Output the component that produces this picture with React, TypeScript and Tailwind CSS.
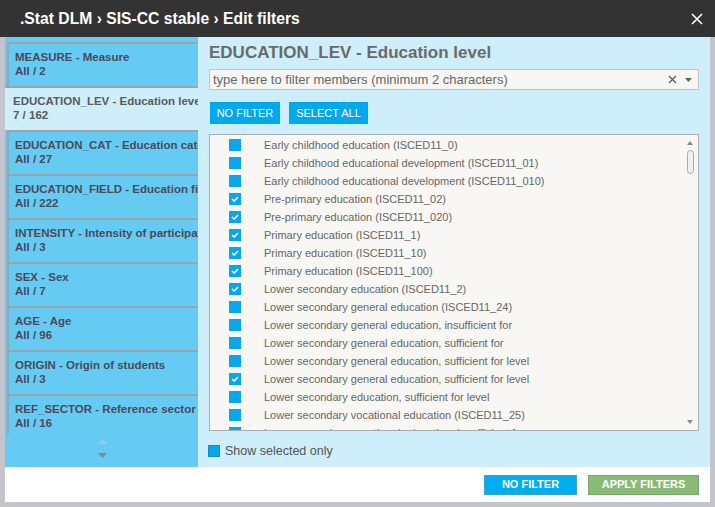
import React from 'react';

const dims = [
  { name: 'MEASURE - Measure', count: 'All / 2' },
  { name: 'EDUCATION_LEV - Education level', count: '7 / 162', active: true },
  { name: 'EDUCATION_CAT - Education category', count: 'All / 27' },
  { name: 'EDUCATION_FIELD - Education field', count: 'All / 222' },
  { name: 'INTENSITY - Intensity of participation', count: 'All / 3' },
  { name: 'SEX - Sex', count: 'All / 7' },
  { name: 'AGE - Age', count: 'All / 96' },
  { name: 'ORIGIN - Origin of students', count: 'All / 3' },
  { name: 'REF_SECTOR - Reference sector', count: 'All / 16' },
];

const members: [string, boolean][] = [
  ['Early childhood education (ISCED11_0)', false],
  ['Early childhood educational development (ISCED11_01)', false],
  ['Early childhood educational development (ISCED11_010)', false],
  ['Pre-primary education (ISCED11_02)', true],
  ['Pre-primary education (ISCED11_020)', true],
  ['Primary education (ISCED11_1)', true],
  ['Primary education (ISCED11_10)', true],
  ['Primary education (ISCED11_100)', true],
  ['Lower secondary education (ISCED11_2)', true],
  ['Lower secondary general education (ISCED11_24)', false],
  ['Lower secondary general education, insufficient for', false],
  ['Lower secondary general education, sufficient for', false],
  ['Lower secondary general education, sufficient for level', false],
  ['Lower secondary general education, sufficient for level', true],
  ['Lower secondary education, sufficient for level', false],
  ['Lower secondary vocational education (ISCED11_25)', false],
  ['Lower secondary vocational education, insufficient for', false],
];

const Check = ({ on }: { on: boolean }) => (
  <span className="w-[12px] h-[12px] bg-[#08a7ea] flex items-center justify-center shrink-0">
    {on && (
      <svg width="8" height="6" viewBox="0 0 8 6">
        <path d="M1 3 L3.2 5 L7 1" stroke="#fff" strokeWidth="1.6" fill="none" />
      </svg>
    )}
  </span>
);

export default function App() {
  return (
    <div className="w-[715px] h-[507px] bg-[#c4c4cc] flex flex-col overflow-hidden font-['Liberation_Sans',Arial,sans-serif]">
      {/* Title bar */}
      <div className="h-[37px] bg-[#333333] flex items-center justify-between pl-[20px] pr-[12px] shrink-0">
        <span className="text-white font-bold text-[15.7px]">.Stat DLM › SIS-CC stable › Edit filters</span>
        <svg width="12" height="12" viewBox="0 0 12 12">
          <path d="M1 1 L11 11 M11 1 L1 11" stroke="#fff" strokeWidth="1.6" />
        </svg>
      </div>

      <div className="flex-1 flex flex-col mx-[5px] mb-[5px]">
        <div className="flex h-[430px]">
          {/* Dimension list */}
          <div className="w-[193px] bg-[#66cbf2] flex flex-col pt-[5px]">
            <div className="h-[392px] overflow-hidden flex flex-col">
              {dims.map((d) =>
                d.active ? (
                  <div key={d.name} className="h-[44px] shrink-0 bg-[#cdeefa] border-t-2 border-[#9ca3aa] pl-[8px] pt-[6px] text-[#5a5a5a] text-[11.5px] font-bold leading-[14px] whitespace-nowrap overflow-hidden">
                    <div>{d.name}</div>
                    <div>{d.count}</div>
                  </div>
                ) : (
                  <div key={d.name} className="h-[44px] shrink-0 ml-[2px] border-l-2 border-t-2 border-[#9ca3aa] pl-[6px] pt-[6px] text-[#4a4a5a] text-[11.5px] font-bold leading-[14px] whitespace-nowrap overflow-hidden">
                    <div>{d.name}</div>
                    <div>{d.count}</div>
                  </div>
                )
              )}
            </div>
            <div className="flex flex-col items-center gap-[9px] pt-[5px] pl-[2px]">
              <svg width="9" height="5" viewBox="0 0 9 5"><path d="M0 5 L4.5 0 L9 5Z" fill="#9fc9dc" /></svg>
              <svg width="9" height="5" viewBox="0 0 9 5"><path d="M0 0 L4.5 5 L9 0Z" fill="#7a8a99" /></svg>
            </div>
          </div>

          {/* Members panel */}
          <div className="flex-1 bg-[#cdeefa] px-[11px] flex flex-col">
            <div className="h-[32px] flex items-end pb-[4px] text-[#6a6a6a] font-bold text-[17px]">
              EDUCATION_LEV - Education level
            </div>
            <div className="h-[21px] bg-[#f8f7f3] border border-[#c2c6c8] flex items-center pl-[3px] pr-[6px] text-[13px] text-[#666]">
              <span className="flex-1">type here to filter members (minimum 2 characters)</span>
              <svg width="9" height="9" viewBox="0 0 9 9" className="mr-[8px]">
                <path d="M1 1 L8 8 M8 1 L1 8" stroke="#555" strokeWidth="1.2" />
              </svg>
              <svg width="7" height="4" viewBox="0 0 7 4"><path d="M0 0 L3.5 4 L7 0Z" fill="#666" /></svg>
            </div>
            <div className="flex gap-[9px] mt-[12px] pl-[1px]">
              <button className="h-[22px] w-[70px] bg-[#00a8ec] text-white text-[11px]">NO FILTER</button>
              <button className="h-[22px] w-[79px] bg-[#00a8ec] text-white text-[11px]">SELECT ALL</button>
            </div>
            <div className="mt-[10px] h-[297px] bg-[#f8f7f3] border border-[#a9adb0] flex overflow-hidden">
              <div className="flex-1 flex flex-col pt-[1px] overflow-hidden">
                {members.map(([label, on], i) => (
                  <div key={i} className="h-[18px] shrink-0 flex items-center pl-[19px] gap-[23px] text-[11px] text-[#666] whitespace-nowrap">
                    <Check on={on} />
                    <span>{label}</span>
                  </div>
                ))}
              </div>
              <div className="w-[16px] flex flex-col items-center pt-[6px] pb-[6px]">
                <svg width="6" height="4" viewBox="0 0 6 4"><path d="M0 4 L3 0 L6 4Z" fill="#888" /></svg>
                <div className="w-[7px] h-[24px] mt-[5px] rounded-full border border-[#a9a9ae] bg-[#f0f0f0]" />
                <div className="flex-1" />
                <svg width="6" height="4" viewBox="0 0 6 4"><path d="M0 0 L3 4 L6 0Z" fill="#888" /></svg>
              </div>
            </div>
            <div className="flex items-center gap-[5px] mt-[11px] -ml-[1px]">
              <span className="w-[12px] h-[12px] bg-[#08a7ea] border border-[#0a90c8]" />
              <span className="text-[12.5px] text-[#555]">Show selected only</span>
            </div>
          </div>
        </div>

        {/* Footer */}
        <div className="flex-1 bg-white flex items-center justify-end pr-[11px] gap-[11px]">
          <button className="h-[20px] w-[93px] bg-[#00aeef] border border-[#3fa0d8] text-white font-bold text-[11px]">NO FILTER</button>
          <button className="h-[20px] w-[111px] bg-[#8aba78] border border-[#79a868] text-white font-bold text-[11px]">APPLY FILTERS</button>
        </div>
      </div>
    </div>
  );
}
